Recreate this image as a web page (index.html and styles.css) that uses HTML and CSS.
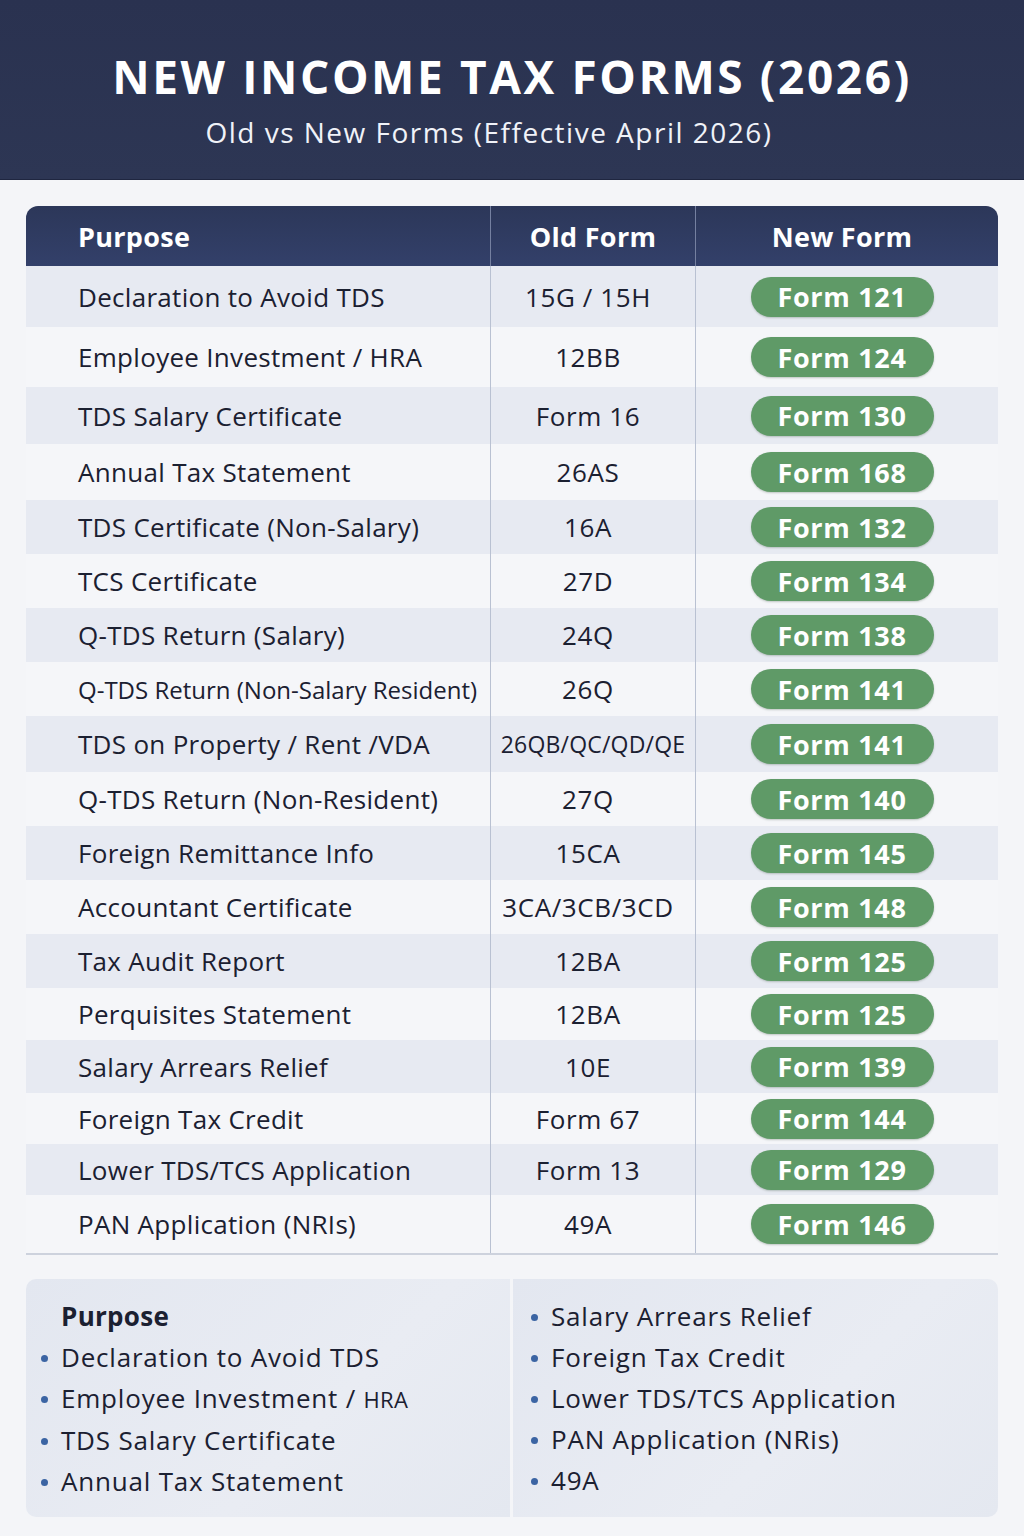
FILE: index.html
```html
<!DOCTYPE html>
<html lang="en">
<head>
<meta charset="utf-8">
<title>New Income Tax Forms (2026)</title>
<link rel="stylesheet" href="styles.css">
</head>
<body>
<header class="hero">
  <h1 class="hero-title">NEW INCOME TAX FORMS (2026)</h1>
  <p class="hero-sub">Old vs New Forms (Effective April 2026)</p>
</header>
<main class="content">
  <div class="table">
    <div class="row head">
      <div class="cell purpose">Purpose</div>
      <div class="cell old">Old Form</div>
      <div class="cell new">New Form</div>
    </div>
    <div class="row"><div class="cell purpose">Declaration to Avoid TDS</div><div class="cell old">15G / 15H</div><div class="cell new"><span class="badge">Form 121</span></div></div>
    <div class="row"><div class="cell purpose">Employee Investment / HRA</div><div class="cell old">12BB</div><div class="cell new"><span class="badge">Form 124</span></div></div>
    <div class="row"><div class="cell purpose">TDS Salary Certificate</div><div class="cell old">Form 16</div><div class="cell new"><span class="badge">Form 130</span></div></div>
    <div class="row"><div class="cell purpose">Annual Tax Statement</div><div class="cell old">26AS</div><div class="cell new"><span class="badge">Form 168</span></div></div>
    <div class="row"><div class="cell purpose">TDS Certificate (Non-Salary)</div><div class="cell old">16A</div><div class="cell new"><span class="badge">Form 132</span></div></div>
    <div class="row"><div class="cell purpose">TCS Certificate</div><div class="cell old">27D</div><div class="cell new"><span class="badge">Form 134</span></div></div>
    <div class="row"><div class="cell purpose">Q-TDS Return (Salary)</div><div class="cell old">24Q</div><div class="cell new"><span class="badge">Form 138</span></div></div>
    <div class="row"><div class="cell purpose tight">Q-TDS Return (Non-Salary Resident)</div><div class="cell old">26Q</div><div class="cell new"><span class="badge">Form 141</span></div></div>
    <div class="row"><div class="cell purpose">TDS on Property / Rent /VDA</div><div class="cell old small">26QB/QC/QD/QE</div><div class="cell new"><span class="badge">Form 141</span></div></div>
    <div class="row"><div class="cell purpose">Q-TDS Return (Non-Resident)</div><div class="cell old">27Q</div><div class="cell new"><span class="badge">Form 140</span></div></div>
    <div class="row"><div class="cell purpose">Foreign Remittance Info</div><div class="cell old">15CA</div><div class="cell new"><span class="badge">Form 145</span></div></div>
    <div class="row"><div class="cell purpose">Accountant Certificate</div><div class="cell old">3CA/3CB/3CD</div><div class="cell new"><span class="badge">Form 148</span></div></div>
    <div class="row"><div class="cell purpose">Tax Audit Report</div><div class="cell old">12BA</div><div class="cell new"><span class="badge">Form 125</span></div></div>
    <div class="row"><div class="cell purpose">Perquisites Statement</div><div class="cell old">12BA</div><div class="cell new"><span class="badge">Form 125</span></div></div>
    <div class="row"><div class="cell purpose">Salary Arrears Relief</div><div class="cell old">10E</div><div class="cell new"><span class="badge">Form 139</span></div></div>
    <div class="row"><div class="cell purpose">Foreign Tax Credit</div><div class="cell old">Form 67</div><div class="cell new"><span class="badge">Form 144</span></div></div>
    <div class="row"><div class="cell purpose">Lower TDS/TCS Application</div><div class="cell old">Form 13</div><div class="cell new"><span class="badge">Form 129</span></div></div>
    <div class="row"><div class="cell purpose">PAN Application (NRIs)</div><div class="cell old">49A</div><div class="cell new"><span class="badge">Form 146</span></div></div>
  </div>

  <section class="summary">
    <div class="panel left">
      <h2 class="panel-title">Purpose</h2>
      <ul class="list">
        <li>Declaration to Avoid TDS</li>
        <li>Employee Investment / <span class="sm">HRA</span></li>
        <li>TDS Salary Certificate</li>
        <li>Annual Tax Statement</li>
      </ul>
    </div>
    <div class="panel right">
      <ul class="list">
        <li>Salary Arrears Relief</li>
        <li>Foreign Tax Credit</li>
        <li>Lower TDS/TCS Application</li>
        <li>PAN Application (NRis)</li>
        <li>49A</li>
      </ul>
    </div>
  </section>
</main>
</body>
</html>
```

FILE: styles.css
```css
* { box-sizing: border-box; }

html, body {
  margin: 0;
  padding: 0;
}

body {
  width: 1024px;
  min-height: 1536px;
  background: #f4f5f8;
  font-family: "Open Sans", "Lato", sans-serif;
  color: #1b2031;
}

.hero {
  height: 180px;
  background: linear-gradient(180deg, #2a3250 0%, #2d3654 100%);
  color: #ffffff;
  text-align: center;
  padding-top: 49px;
  border-bottom: 1px solid #1f2640;
}

.hero-title {
  margin: 0;
  font-size: 46px;
  line-height: 54px;
  font-weight: 700;
  letter-spacing: 2.6px;
}

.hero-sub {
  margin: 12px 0 0;
  padding-right: 46px;
  font-size: 28px;
  line-height: 34px;
  font-weight: 400;
  letter-spacing: 1.5px;
  color: #f0f2f8;
}

.content {
  padding: 26px 26px 0;
}

.table {
  width: 972px;
  border-bottom: 2px solid #cdd2dd;
}

.row {
  display: grid;
  grid-template-columns: 464px 206px 302px;
  height: 54px;
}

.row:nth-child(even) { background: #e7eaf2; }
.row:nth-child(odd) { background: #f5f6f9; }

.row:nth-child(2) { height: 61px; }
.row:nth-child(3) { height: 60px; }
.row:nth-child(4) { height: 57px; }
.row:nth-child(5) { height: 56px; }
.row:nth-child(10) { height: 56px; }
.row:nth-child(15) { height: 52px; }
.row:nth-child(16) { height: 53px; }
.row:nth-child(17) { height: 51px; }
.row:nth-child(18) { height: 51px; }
.row:nth-child(19) { height: 58px; }

.row.head {
  height: 60px;
  background: linear-gradient(180deg, #2c3759 0%, #33406a 100%);
  border-radius: 12px 12px 0 0;
  color: #ffffff;
  font-weight: 700;
}

.cell {
  display: flex;
  align-items: center;
  font-size: 26px;
  letter-spacing: 0.3px;
}

.head .cell {
  font-size: 27px;
  letter-spacing: 0.3px;
}

.purpose {
  padding-left: 52px;
  white-space: nowrap;
}

.purpose.tight {
  font-size: 24px;
  letter-spacing: 0;
}

.old {
  justify-content: center;
  border-left: 1px solid #b9c1d2;
  border-right: 1px solid #b9c1d2;
  padding-right: 10px;
  white-space: nowrap;
  letter-spacing: 0.6px;
}

.head .old {
  border-color: #7580a0;
  padding-right: 0;
}

.old.small {
  font-size: 23px;
  padding-right: 0;
  letter-spacing: 0.2px;
}

.new {
  justify-content: center;
  padding-right: 10px;
}

.badge {
  display: inline-flex;
  align-items: center;
  justify-content: center;
  width: 183px;
  height: 40px;
  border-radius: 20px;
  background: #5f9a67;
  color: #ffffff;
  font-weight: 700;
  font-size: 27px;
  letter-spacing: 0.7px;
  box-shadow: 0 1px 2px rgba(30, 60, 35, 0.25);
}

.summary {
  margin-top: 24px;
  display: grid;
  grid-template-columns: 484px 485px;
  gap: 3px;
  height: 238px;
}

.panel {
  background: linear-gradient(135deg, #e3e7f0 0%, #e9ecf3 60%, #e4e8f0 100%);
  padding-top: 17px;
}

.panel.left {
  border-radius: 10px 0 0 10px;
  padding-left: 35px;
}

.panel.right {
  border-radius: 0 10px 10px 0;
  padding-left: 38px;
}

.panel-title {
  margin: 0;
  font-size: 26px;
  line-height: 41px;
  font-weight: 700;
  letter-spacing: 0.3px;
}

.list {
  margin: 0;
  padding: 0;
  list-style: none;
}

.list li {
  position: relative;
  font-size: 26px;
  line-height: 41px;
  letter-spacing: 0.8px;
  white-space: nowrap;
}

.list li::before {
  content: "";
  position: absolute;
  left: -20px;
  top: 18px;
  width: 7px;
  height: 7px;
  border-radius: 50%;
  background: #3b64a3;
}

.sm {
  font-size: 22px;
  letter-spacing: 0.3px;
}
```
